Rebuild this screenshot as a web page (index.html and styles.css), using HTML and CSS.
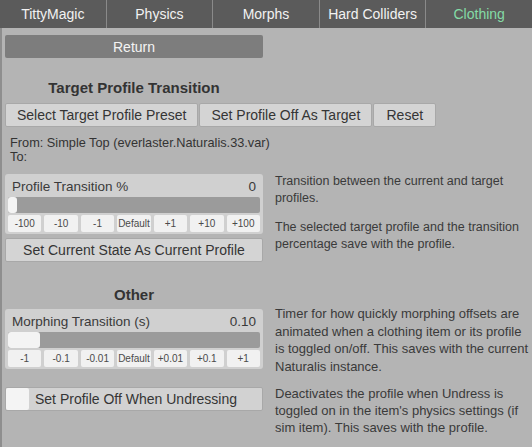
FILE: index.html
```html
<!DOCTYPE html>
<html lang="en">
<head>
    <meta charset="UTF-8">
    <title>TittyMagic - Clothing</title>
    <link rel="stylesheet" href="styles.css">
</head>
<body>

    <!-- Tab Bar -->
    <nav class="tabs">
        <div class="tab">TittyMagic</div>
        <div class="tab">Physics</div>
        <div class="tab">Morphs</div>
        <div class="tab">Hard Colliders</div>
        <div class="tab active">Clothing</div>
    </nav>

    <div class="page">
        <div class="return-btn">Return</div>

        <!-- Target Profile Transition -->
        <h2 class="section-title">Target Profile Transition</h2>
        <div class="btn-row">
            <div class="btn">Select Target Profile Preset</div>
            <div class="btn">Set Profile Off As Target</div>
            <div class="btn btn-reset">Reset</div>
        </div>
        <div class="from-to">
            From: Simple Top (everlaster.Naturalis.33.var)<br>
            To:
        </div>

        <div class="split">
            <div class="left">
                <div class="slider">
                    <div class="slider-head">
                        <span>Profile Transition %</span>
                        <span>0</span>
                    </div>
                    <div class="track"><div class="handle" style="width: 9px"></div></div>
                    <div class="steps">
                        <div class="step">-100</div>
                        <div class="step">-10</div>
                        <div class="step">-1</div>
                        <div class="step">Default</div>
                        <div class="step">+1</div>
                        <div class="step">+10</div>
                        <div class="step">+100</div>
                    </div>
                </div>
                <div class="btn wide-btn">Set Current State As Current Profile</div>
            </div>
            <div class="right info-a">
                <p>Transition between the current and target profiles.</p>
                <p>The selected target profile and the transition percentage save with the profile.</p>
            </div>
        </div>

        <!-- Other -->
        <h2 class="section-title other-title">Other</h2>
        <div class="split">
            <div class="left">
                <div class="slider">
                    <div class="slider-head">
                        <span>Morphing Transition (s)</span>
                        <span>0.10</span>
                    </div>
                    <div class="track"><div class="handle" style="width: 32px"></div></div>
                    <div class="steps">
                        <div class="step">-1</div>
                        <div class="step">-0.1</div>
                        <div class="step">-0.01</div>
                        <div class="step">Default</div>
                        <div class="step">+0.01</div>
                        <div class="step">+0.1</div>
                        <div class="step">+1</div>
                    </div>
                </div>
            </div>
            <div class="right info-b">
                <p>Timer for how quickly morphing offsets are animated when a clothing item or its profile is toggled on/off. This saves with the current Naturalis instance.</p>
            </div>
        </div>

        <div class="split toggle-split">
            <div class="left">
                <div class="toggle">
                    <div class="check"></div>
                    <span>Set Profile Off When Undressing</span>
                </div>
            </div>
            <div class="right info-c">
                <p>Deactivates the profile when Undress is toggled on in the item's physics settings (if sim item). This saves with the profile.</p>
            </div>
        </div>
    </div>

</body>
</html>
```

FILE: styles.css
```css
* {
    margin: 0;
    padding: 0;
    box-sizing: border-box;
}

body {
    font-family: 'Liberation Sans', Arial, sans-serif;
    background-color: #b4b4b4;
    color: #333;
    width: 532px;
    height: 447px;
    overflow: hidden;
}

/* Tab Bar */
.tabs {
    display: flex;
    height: 28px;
    background-color: #5b5b5b;
}

.tab {
    flex: 1;
    display: flex;
    align-items: center;
    justify-content: center;
    color: #f2f2f2;
    font-size: 14px;
    border-right: 1px solid #8a8a8a;
}

.tab:last-child {
    border-right: none;
}

.tab.active {
    color: #84dca6;
}

/* Page */
.page {
    height: 419px;
    border-left: 2px solid #8e8e8e;
    padding: 7px 0 0 3px;
}

.return-btn {
    width: 258px;
    height: 23px;
    background-color: #7d7d7d;
    color: #f4f4f4;
    font-size: 14px;
    display: flex;
    align-items: center;
    justify-content: center;
    border-radius: 2px;
}

.section-title {
    width: 258px;
    text-align: center;
    font-size: 15px;
    font-weight: bold;
    color: #333;
    margin: 21px 0 7px;
    line-height: 17px;
}

.btn-row {
    display: flex;
    gap: 1px;
}

.btn {
    height: 24px;
    background-color: #d4d4d4;
    border: 1px solid #a8a8a8;
    border-radius: 2px;
    font-size: 14px;
    color: #353535;
    display: flex;
    align-items: center;
    justify-content: center;
    padding: 0 11px;
}

.btn-reset {
    width: 63px;
}

.from-to {
    font-size: 12.75px;
    line-height: 14px;
    margin: 9px 0 10px 5px;
    color: #333;
}

/* Two column rows */
.split {
    display: flex;
    gap: 12px;
}

.left {
    width: 258px;
    flex-shrink: 0;
}

.right {
    width: 258px;
    font-size: 13px;
    line-height: 17px;
    color: #3a3a3a;
}

.right p + p {
    margin-top: 12px;
}

.info-a {
    font-size: 12.5px;
    margin-top: -1px;
}

/* Slider */
.slider {
    background-color: #d0d0d0;
    border-radius: 3px;
    padding: 0 3px 2px;
}

.slider-head {
    display: flex;
    justify-content: space-between;
    font-size: 13.5px;
    color: #3a3a3a;
    height: 23px;
    align-items: center;
    padding: 1px 4px 0 4px;
}

.track {
    height: 16px;
    background-color: #9b9b9b;
    border-radius: 2px;
}

.handle {
    height: 16px;
    background-color: #f4f4f4;
    border-radius: 3px;
}

.steps {
    display: flex;
    gap: 3px;
    margin-top: 2px;
}

.step {
    flex: 1;
    height: 17px;
    background-color: #f1f1f1;
    border-radius: 2px;
    font-size: 10px;
    color: #4a4a4a;
    display: flex;
    align-items: center;
    justify-content: center;
}

.wide-btn {
    margin-top: 4px;
    width: 258px;
    padding: 0;
}

.other-title {
    margin: 24px 0 6px;
}

.info-b {
    margin-top: -4px;
    line-height: 17.5px;
}

/* Toggle */
.toggle-split {
    margin-top: 12px;
}

.toggle {
    display: flex;
    align-items: center;
    height: 24px;
    background-color: #d2d2d2;
    border: 1px solid #a8a8a8;
    border-radius: 2px;
    font-size: 14px;
    color: #353535;
}

.check {
    width: 23px;
    height: 22px;
    background-color: #f4f4f4;
    border-radius: 2px;
    margin-right: 6px;
}

.info-c {
    margin-top: -2px;
}
```
